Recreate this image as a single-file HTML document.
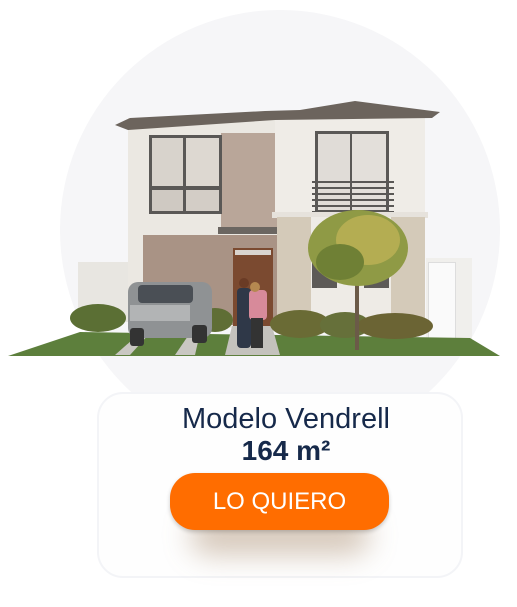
<!DOCTYPE html>
<html><head><style>
*{margin:0;padding:0;box-sizing:border-box}
body{width:517px;height:607px;background:#fff;position:relative;overflow:hidden;font-family:"Liberation Sans",sans-serif}
.a{position:absolute}
</style></head><body>
<div class="a" style="left:60px;top:10px;width:440px;height:440px;border-radius:50%;background:#f6f6f8"></div>
<div class="a" style="left:78px;top:262px;width:52px;height:60px;background:#e8e6e1"></div>
<div class="a" style="left:426px;top:258px;width:46px;height:86px;background:#f0efec"></div>
<div class="a" style="left:428px;top:262px;width:28px;height:82px;background:#fafafa;border:1px solid #ddd"></div>
<div class="a" style="left:128px;top:118px;width:150px;height:210px;background:#ebe8e2"></div>
<div class="a" style="left:221px;top:133px;width:56px;height:95px;background:#b9a699"></div>
<div class="a" style="left:149px;top:135px;width:73px;height:79px;background:#5a5856"></div>
<div class="a" style="left:152px;top:138px;width:31px;height:48px;background:#d8d3cc"></div>
<div class="a" style="left:186px;top:138px;width:33px;height:48px;background:#ddd8d1"></div>
<div class="a" style="left:152px;top:190px;width:31px;height:21px;background:#cfc9c2"></div>
<div class="a" style="left:186px;top:190px;width:33px;height:21px;background:#d3cdc6"></div>
<div class="a" style="left:143px;top:235px;width:135px;height:90px;background:#a99385"></div>
<div class="a" style="left:218px;top:227px;width:84px;height:7px;background:#6b6661"></div>
<div class="a" style="left:233px;top:248px;width:40px;height:78px;background:#7b4a30"></div>
<div class="a" style="left:235px;top:250px;width:36px;height:5px;background:#d9d4ce"></div>
<div class="a" style="left:275px;top:115px;width:150px;height:102px;background:#efece7"></div>
<div class="a" style="left:315px;top:131px;width:74px;height:81px;background:#5a5856"></div>
<div class="a" style="left:318px;top:134px;width:32px;height:76px;background:#e0dcd7"></div>
<div class="a" style="left:352px;top:134px;width:34px;height:76px;background:#e3dfda"></div>
<div class="a" style="left:312px;top:181px;width:82px;height:31px;background:repeating-linear-gradient(#5a5856 0 2px,transparent 2px 6px)"></div>
<div class="a" style="left:272px;top:212px;width:156px;height:6px;background:#e6e2dc"></div>
<div class="a" style="left:277px;top:217px;width:148px;height:105px;background:#d4cab9"></div>
<div class="a" style="left:311px;top:217px;width:80px;height:110px;background:#eeebe6"></div>
<div class="a" style="left:312px;top:262px;width:25px;height:26px;background:#5d5a57"></div>
<div class="a" style="left:364px;top:262px;width:25px;height:26px;background:#5d5a57"></div>
<svg class="a" style="left:0;top:0" width="517" height="400">
<polygon points="115,125 130,118 265,111 300,110 355,101 440,112 432,118 275,120 128,130" fill="#6c645d"/>
<polygon points="8,356 80,332 470,338 500,356" fill="#5d7f3c"/>
<polygon points="115,355 140,333 150,333 130,355" fill="#c9c7c2"/>
<polygon points="175,355 190,333 200,333 195,355" fill="#c9c7c2"/>
<polygon points="225,355 232,326 272,326 280,355" fill="#c4c2bd"/>
<ellipse cx="98" cy="318" rx="28" ry="14" fill="#5b6f34"/>
<ellipse cx="215" cy="320" rx="18" ry="12" fill="#5f6e35"/>
<ellipse cx="300" cy="324" rx="30" ry="14" fill="#6a6b35"/>
<ellipse cx="345" cy="325" rx="25" ry="13" fill="#66703a"/>
<ellipse cx="395" cy="326" rx="38" ry="13" fill="#6b6434"/>
<rect x="128" y="282" width="84" height="56" rx="10" fill="#8f9294"/>
<rect x="138" y="285" width="55" height="18" rx="4" fill="#4a4f55"/>
<rect x="130" y="305" width="60" height="16" fill="#b2b4b5"/>
<rect x="130" y="328" width="14" height="18" rx="3" fill="#333"/>
<rect x="192" y="325" width="15" height="18" rx="3" fill="#333"/>
<rect x="237" y="288" width="14" height="60" rx="4" fill="#2f3848"/>
<rect x="249" y="290" width="18" height="30" rx="4" fill="#d78a9a"/>
<rect x="251" y="318" width="12" height="30" fill="#333"/>
<circle cx="244" cy="283" r="5" fill="#6a3b25"/>
<circle cx="255" cy="287" r="5" fill="#b58850"/>
<rect x="355" y="270" width="4" height="80" fill="#6b5a48"/>
<ellipse cx="358" cy="248" rx="50" ry="38" fill="#8f9a45"/>
<ellipse cx="368" cy="240" rx="32" ry="25" fill="#b4ad52"/>
<ellipse cx="340" cy="262" rx="24" ry="18" fill="#6f8035"/>
</svg>
<div class="a" style="left:97px;top:392px;width:366px;height:186px;border-radius:26px;background:#fefefe;border:2px solid #f3f4f7"></div>
<div class="a" style="left:80px;top:403px;width:412px;text-align:center;font-size:29px;color:#16294a">Modelo Vendrell</div>
<div class="a" style="left:80px;top:435px;width:412px;text-align:center;font-size:28px;font-weight:bold;color:#16294a">164 m²</div>
<div class="a" style="left:190px;top:515px;width:180px;height:40px;border-radius:30px;background:rgba(140,100,60,.35);filter:blur(14px)"></div>
<div class="a" style="left:170px;top:473px;width:219px;height:57px;border-radius:25px;background:#ff6d00;box-shadow:0 2px 4px rgba(0,0,0,.2);color:#fff;font-size:24px;text-align:center;line-height:57px">LO QUIERO</div>
</body></html>
